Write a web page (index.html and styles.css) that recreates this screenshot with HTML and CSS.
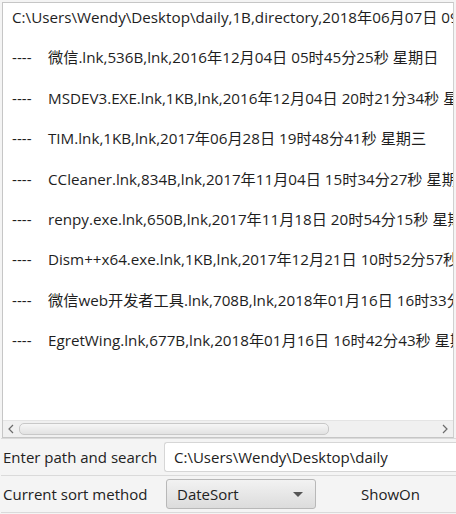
FILE: index.html
```html
<!DOCTYPE html>
<html>
<head>
<meta charset="utf-8">
<link rel="stylesheet" href="styles.css">
</head>
<body>
<div class="win">
  <div class="area">
    <div class="content">
      <div class="line">C:\Users\Wendy\Desktop\daily,1B,directory,2018年06月07日 09时12分00秒 星期四</div>
      <div class="line"></div>
      <div class="line"><span class="dash">----</span>微信.lnk,536B,lnk,2016年12月04日 05时45分25秒 星期日</div>
      <div class="line"></div>
      <div class="line"><span class="dash">----</span>MSDEV3.EXE.lnk,1KB,lnk,2016年12月04日 20时21分34秒 星期日</div>
      <div class="line"></div>
      <div class="line"><span class="dash">----</span>TIM.lnk,1KB,lnk,2017年06月28日 19时48分41秒 星期三</div>
      <div class="line"></div>
      <div class="line"><span class="dash">----</span>CCleaner.lnk,834B,lnk,2017年11月04日 15时34分27秒 星期六</div>
      <div class="line"></div>
      <div class="line"><span class="dash">----</span>renpy.exe.lnk,650B,lnk,2017年11月18日 20时54分15秒 星期六</div>
      <div class="line"></div>
      <div class="line"><span class="dash">----</span>Dism++x64.exe.lnk,1KB,lnk,2017年12月21日 10时52分57秒 星期四</div>
      <div class="line"></div>
      <div class="line"><span class="dash">----</span>微信web开发者工具.lnk,708B,lnk,2018年01月16日 16时33分50秒 星期二</div>
      <div class="line"></div>
      <div class="line"><span class="dash">----</span>EgretWing.lnk,677B,lnk,2018年01月16日 16时42分43秒 星期二</div>
    </div>
    <div class="hbar">
      <div class="arrow">
        <svg width="8" height="10" viewBox="0 0 8 10"><path d="M6 1 L2 5 L6 9" fill="none" stroke="#6b6b6b" stroke-width="1.2"/></svg>
      </div>
      <div class="track"><div class="thumb"></div></div>
      <div class="arrow">
        <svg width="8" height="10" viewBox="0 0 8 10"><path d="M2 1 L6 5 L2 9" fill="none" stroke="#6b6b6b" stroke-width="1.2"/></svg>
      </div>
    </div>
  </div>
  <div class="row">
    <div class="label">Enter path and search</div>
    <div class="field">C:\Users\Wendy\Desktop\daily</div>
  </div>
  <div class="row">
    <div class="label">Current sort method</div>
    <div class="combo"><span>DateSort</span><span class="caret"></span></div>
    <div class="show">ShowOn</div>
  </div>
</div>
</body>
</html>
```
FILE: styles.css
```css
html, body {
  margin: 0;
  padding: 0;
  background: #f4f4f4;
  font-family: "Open Sans", "Noto Sans CJK SC", sans-serif;
  font-size: 15px;
  color: #222;
}
.win {
  width: 456px;
  height: 514px;
  overflow: hidden;
  display: flex;
  flex-direction: column;
  padding: 2px 0 0 2px;
  box-sizing: border-box;
}
.area {
  width: 452px;
  height: 436px;
  border: 1px solid #c6c6c6;
  border-right-color: #d0d0d0;
  background: #fff;
  box-sizing: border-box;
  display: flex;
  flex-direction: column;
  overflow: hidden;
}
.content {
  flex: 1;
  padding: 4px 0 0 9px;
  overflow: hidden;
  font-size: 15.2px;
  color: #1e1e1e;
}
.line {
  white-space: pre;
  height: 20.2px;
  line-height: 20px;
}
.dash {
  display: inline-block;
  width: 36px;
}
.hbar {
  height: 16px;
  background: #f0f0f0;
  border-top: 1px solid #e4e4e4;
  display: flex;
  align-items: center;
}
.arrow {
  width: 16px;
  height: 16px;
  display: flex;
  align-items: center;
  justify-content: center;
}
.track {
  flex: 1;
  height: 14px;
}
.thumb {
  width: 310px;
  height: 12px;
  margin-top: 1px;
  border: 1px solid #c8c8c8;
  border-radius: 5px;
  background: linear-gradient(#f6f6f6, #e2e2e2);
  box-sizing: border-box;
}
.row {
  height: 36px;
  display: flex;
  align-items: center;
  border-top: 1px solid #dadada;
  margin-left: -1px;
  padding-left: 2px;
}
.row:last-child {
  border-bottom: 1px solid #dadada;
}
.label {
  width: 160px;
  white-space: nowrap;
}
.field {
  margin-left: 1px;
  flex: 1;
  height: 30px;
  background: #fff;
  border: 1px solid #d6d6d6;
  border-right: none;
  border-radius: 3px 0 0 3px;
  box-sizing: border-box;
  padding-left: 9px;
  line-height: 28px;
  white-space: nowrap;
}
.combo {
  margin-left: 3px;
  width: 150px;
  height: 30px;
  box-sizing: border-box;
  border: 1px solid #b8b8b8;
  border-radius: 3px;
  background: linear-gradient(#f2f2f2, #dcdcdc);
  display: flex;
  align-items: center;
  justify-content: space-between;
  padding: 0 12px 0 10px;
}
.caret {
  width: 0;
  height: 0;
  border-left: 5px solid transparent;
  border-right: 5px solid transparent;
  border-top: 5px solid #555;
}
.show {
  margin-left: 45px;
}
```
